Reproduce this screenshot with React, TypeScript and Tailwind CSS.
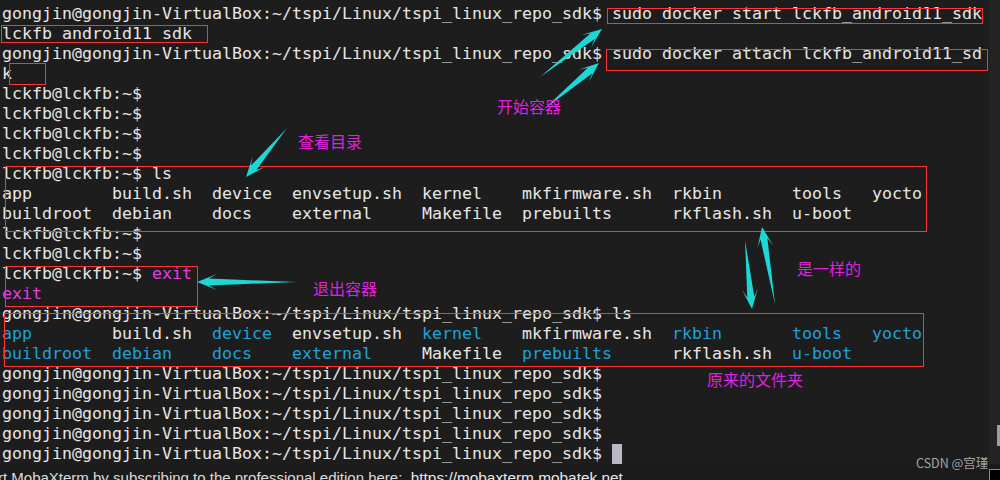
import React from "react";

type Seg = { t: string; c?: "w" | "b" | "m" };

const PROMPT = "gongjin@gongjin-VirtualBox:~/tspi/Linux/tspi_linux_repo_sdk$";
const LPROMPT = "lckfb@lckfb:~$";

const cols = [11, 10, 8, 13, 10, 15, 12, 8, 0];
const row1 = ["app", "build.sh", "device", "envsetup.sh", "kernel", "mkfirmware.sh", "rkbin", "tools", "yocto"];
const row2 = ["buildroot", "debian", "docs", "external", "Makefile", "prebuilts", "rkflash.sh", "u-boot"];
const dirs = ["app", "device", "kernel", "rkbin", "tools", "yocto", "buildroot", "debian", "docs", "external", "prebuilts", "u-boot"];

const lsRow = (names: string[], colored: boolean): Seg[] =>
  names.map((n, i) => ({ t: n.padEnd(cols[i]), c: colored && dirs.includes(n) ? "b" : "w" }));

const lines: Seg[][] = [
  [{ t: PROMPT + " sudo docker start lckfb_android11_sdk" }],
  [{ t: "lckfb_android11_sdk" }],
  [{ t: PROMPT + " sudo docker attach lckfb_android11_sd" }],
  [{ t: "k" }],
  [{ t: LPROMPT }],
  [{ t: LPROMPT }],
  [{ t: LPROMPT }],
  [{ t: LPROMPT }],
  [{ t: LPROMPT + " ls" }],
  lsRow(row1, false),
  lsRow(row2, false),
  [{ t: LPROMPT }],
  [{ t: LPROMPT }],
  [{ t: LPROMPT + " " }, { t: "exit", c: "m" }],
  [{ t: "exit", c: "m" }],
  [{ t: PROMPT + " ls" }],
  lsRow(row1, true),
  lsRow(row2, true),
  [{ t: PROMPT }],
  [{ t: PROMPT }],
  [{ t: PROMPT }],
  [{ t: PROMPT }],
  [{ t: PROMPT + " " }],
];

const colorClass = { w: "text-[#e6e6e6]", b: "text-[#1ea2dc]", m: "text-[#e23fe2]" };

// tapered arrow: thin tail, wider shaft near the head, swept-back barbs
const arrowPoints = (x1: number, y1: number, x2: number, y2: number) => {
  const dx = x2 - x1;
  const dy = y2 - y1;
  const len = Math.hypot(dx, dy);
  const ux = dx / len;
  const uy = dy / len;
  const nx = -uy;
  const ny = ux;
  const head = 20;
  const hw = 8;
  const sw = 3.5;
  const join = { x: x2 - ux * head * 0.6, y: y2 - uy * head * 0.6 };
  const base = { x: x2 - ux * head, y: y2 - uy * head };
  const p = [
    [x1, y1],
    [join.x + nx * sw, join.y + ny * sw],
    [base.x + nx * hw, base.y + ny * hw],
    [x2, y2],
    [base.x - nx * hw, base.y - ny * hw],
    [join.x - nx * sw, join.y - ny * sw],
  ];
  return p.map(([a, b]) => `${a.toFixed(1)},${b.toFixed(1)}`).join(" ");
};

const arrows = [
  [540, 77, 602, 29],
  [543, 110, 599, 63],
  [287, 128, 246, 177],
  [296, 282, 197, 282],
  [775, 304, 762, 227],
  [745, 240, 752, 309],
];

const Box = ({ className }: { className: string }) => (
  <div className={`absolute border border-[#ff3434] ${className}`} />
);

const Note = ({ text, className }: { text: string; className: string }) => (
  <span className={`absolute text-[16px] leading-[16px] text-[#df22df] font-['Noto_Sans_CJK_SC',sans-serif] ${className}`}>
    {text}
  </span>
);

export default function App() {
  return (
    <div className="w-[1000px] h-[480px] overflow-hidden bg-[#1d1d1d] flex flex-col">
      <div className="relative flex h-[467px]">
        <div className="flex-1 pt-[4px] pl-[2px] font-['DejaVu_Sans_Mono',monospace] text-[16.61px] leading-[20px] whitespace-pre">
          {lines.map((segs, i) => (
            <div key={i} className="h-[20px] flex items-center">
              {segs.map((s, j) => (
                <span key={j} className={colorClass[s.c ?? "w"]}>
                  {s.t}
                </span>
              ))}
              {i === lines.length - 1 && <span className="inline-block w-[10px] h-[20px] bg-[#b9b9c6]" />}
            </div>
          ))}
        </div>
        <div className="w-[11px] bg-[#232323] flex flex-col items-end pt-[425px]">
          <div className="w-[3px] h-[21px] bg-[#9e9e9e]" />
        </div>

        <Box className="left-[607px] top-[8px] w-[376px] h-[16px]" />
        <Box className="left-[1px] top-[25px] w-[207px] h-[18px]" />
        <Box className="left-[606px] top-[49px] w-[382px] h-[22px]" />
        <Box className="left-[9px] top-[63px] w-[37px] h-[22px]" />
        <Box className="left-[5px] top-[166px] w-[922px] h-[66px]" />
        <Box className="left-[5px] top-[266px] w-[193px] h-[41px]" />
        <Box className="left-[4px] top-[313px] w-[920px] h-[54px]" />

        <svg className="absolute left-0 top-0 pointer-events-none" width="1000" height="467">
          {arrows.map(([a, b, c, d], i) => (
            <polygon key={i} points={arrowPoints(a, b, c, d)} fill="#1fd6d6" />
          ))}
        </svg>

        <Note text="开始容器" className="left-[497px] top-[98px]" />
        <Note text="查看目录" className="left-[298px] top-[133px]" />
        <Note text="是一样的" className="left-[797px] top-[260px]" />
        <Note text="退出容器" className="left-[313px] top-[280px]" />
        <Note text="原来的文件夹" className="left-[707px] top-[371px]" />

        <span className="absolute left-[916px] top-[456px] text-[12.5px] leading-[14px] text-[#c8c8c8]/80 font-['Noto_Sans_CJK_SC',sans-serif]">
          CSDN @宫瑾
        </span>
      </div>
      <div className="h-px bg-[#6a6a6a]" />
      <div className="flex-1 flex bg-[#1b1b1b]">
        <div className="flex-1 pt-[5px] -ml-[2px] whitespace-pre font-['Liberation_Sans',sans-serif] text-[15px] leading-[18px] text-[#dcdcdc]">
          rt MobaXterm by subscribing to the professional edition here:{"  "}
          <span className="text-[15.4px] text-[#e8e8e8] underline">https://mobaxterm.mobatek.net</span>
        </div>
        <div className="w-[11px] mt-[5px] border-l border-t border-[#888] bg-black" />
      </div>
    </div>
  );
}
